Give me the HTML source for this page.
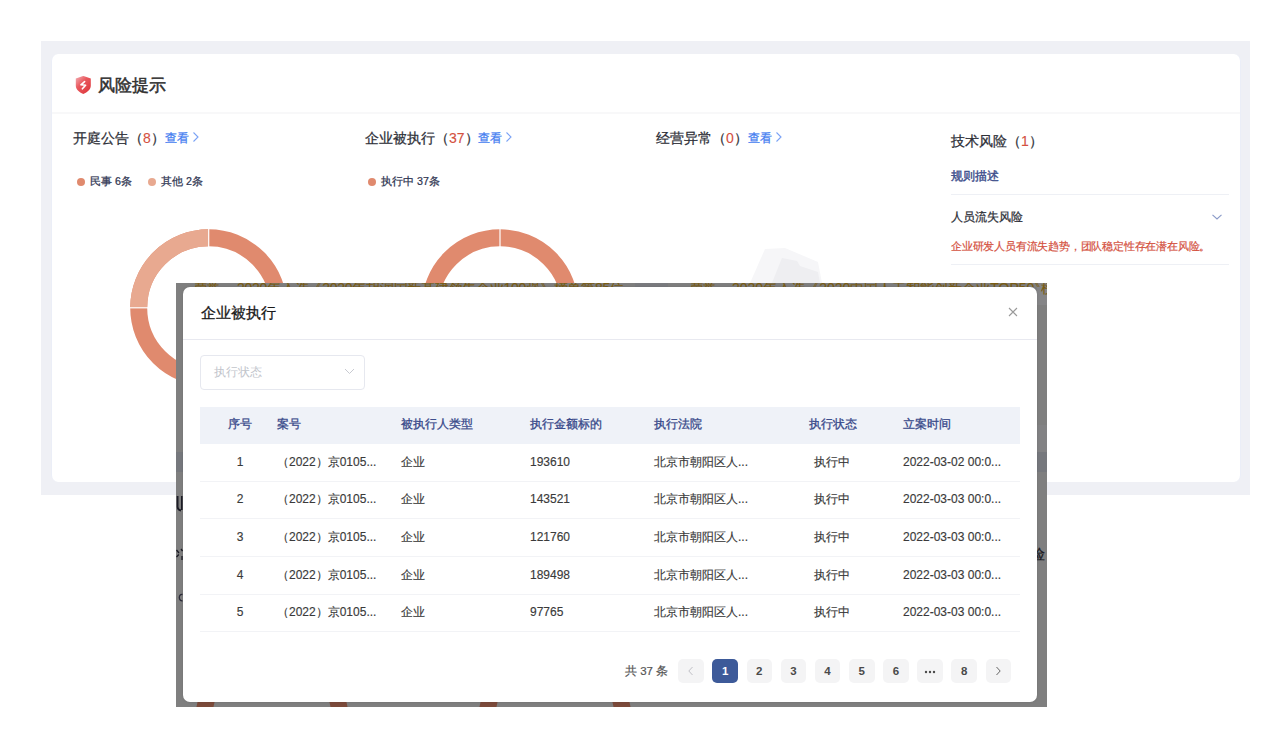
<!DOCTYPE html>
<html><head><meta charset="utf-8">
<style>
*{margin:0;padding:0;box-sizing:border-box}
html,body{width:1267px;height:754px;overflow:hidden;background:#fff;font-family:"Liberation Sans",sans-serif;}
.a{position:absolute;white-space:nowrap}
.panel{left:41px;top:41px;width:1209px;height:454px;background:#eff0f5}
.card{left:51px;top:54px;width:1190px;height:428px;background:#fff;border-radius:7px;border-left:1px solid #ebeef7;border-right:1px solid #ebeef7}
.title{left:98px;top:73px;font-size:17.2px;-webkit-text-stroke:0.5px #303030;color:#303030;line-height:24px}
.hsep{left:52px;top:112px;width:1188px;height:2px;background:#f8f8f9}
.h{font-size:14px;line-height:18px;color:#2e3038;-webkit-text-stroke:0.25px #2e3038}
.h .n{color:#d4503e;-webkit-text-stroke:0.1px #d4503e}
.lk{font-size:12px;line-height:16px;color:#427cf0;-webkit-text-stroke:0.25px #427cf0}
.lg{font-size:10.7px;line-height:14px;color:#2d3350;-webkit-text-stroke:0.22px #2d3350}
.dot{display:inline-block;width:8px;height:8px;border-radius:50%;vertical-align:middle}
.mask{left:176px;top:283px;width:871px;height:424px;background:#7f7f7f;overflow:hidden}
.modal{left:183px;top:287px;width:854px;height:415px;background:#fff;border-radius:7px;box-shadow:0 0 3px rgba(0,0,0,0.12)}
.strip{left:176px;top:283px;width:871px;height:4px;overflow:hidden}
.strip span{position:absolute;top:-4.5px;font-size:14px;line-height:18px;color:#7a5c12;-webkit-text-stroke:0.15px #7a5c12}
.th{font-size:12px;line-height:16px;color:#38498a;-webkit-text-stroke:0.3px #38498a;top:416px}
.td{font-size:12px;line-height:16px;color:#3a3a3a;-webkit-text-stroke:0.15px #3a3a3a}
.rsep{left:200px;width:820px;height:1px;background:#f2f3f6}
.pg{top:659px;width:25.5px;height:23.5px;border-radius:5px;background:#f4f4f5;font-size:11.5px;line-height:25px;text-align:center;color:#4a4a4a;font-weight:bold}
</style></head>
<body>
<div class="a panel"></div>
<div class="a card"></div>
<svg class="a" style="left:72px;top:72px" width="24" height="24" viewBox="0 0 24 24">
  <defs><linearGradient id="sg" x1="0.1" y1="0.1" x2="0.8" y2="0.9"><stop offset="0" stop-color="#f09aa0"/><stop offset="0.4" stop-color="#e9595e"/><stop offset="1" stop-color="#df3b40"/></linearGradient></defs>
  <path d="M11.3 4 C12 4 12.5 4.3 13 4.6 L18.8 6.4 V13.5 C18.8 17.5 15.5 20.3 11.3 22 C7.1 20.3 3.8 17.5 3.8 13.5 V6.4 L9.6 4.6 C10.1 4.3 10.6 4 11.3 4 Z" fill="url(#sg)"/>
  <path d="M12.6 9.6 L8.9 12.8 L13.6 13.3 L10.4 16.8" fill="none" stroke="#fff" stroke-width="1.6" stroke-linecap="round" stroke-linejoin="round"/>
</svg>
<div class="a title">风险提示</div>
<div class="a hsep"></div>

<div class="a h" style="left:73px;top:129px">开庭公告（<span class="n">8</span>）</div>
<div class="a lk" style="left:165px;top:130px">查看</div>
<svg class="a" style="left:192px;top:131px" width="8" height="12"><path d="M1.5 1.5 L6 6 L1.5 10.5" fill="none" stroke="#7aa2f5" stroke-width="1.1"/></svg>
<div class="a h" style="left:365px;top:129px">企业被执行（<span class="n">37</span>）</div>
<div class="a lk" style="left:478px;top:130px">查看</div>
<svg class="a" style="left:505px;top:131px" width="8" height="12"><path d="M1.5 1.5 L6 6 L1.5 10.5" fill="none" stroke="#7aa2f5" stroke-width="1.1"/></svg>
<div class="a h" style="left:656px;top:129px">经营异常（<span class="n">0</span>）</div>
<div class="a lk" style="left:748px;top:130px">查看</div>
<svg class="a" style="left:775px;top:131px" width="8" height="12"><path d="M1.5 1.5 L6 6 L1.5 10.5" fill="none" stroke="#7aa2f5" stroke-width="1.1"/></svg>
<div class="a h" style="left:951px;top:132px">技术风险（<span class="n">1</span>）</div>

<div class="a lg" style="left:77px;top:174px"><span class="dot" style="background:#e08a6e;margin-right:5px"></span>民事 6条</div>
<div class="a lg" style="left:148px;top:174px"><span class="dot" style="background:#e8a990;margin-right:5px"></span>其他 2条</div>
<div class="a lg" style="left:368px;top:174px"><span class="dot" style="background:#e08a6e;margin-right:5px"></span>执行中 37条</div>

<!-- donuts -->
<svg class="a" style="left:0;top:0" width="1267" height="754">
  <circle cx="208.7" cy="307.8" r="70" fill="none" stroke="#e08a6e" stroke-width="17"/>
  <path d="M138.7 307.8 A70 70 0 0 1 208.7 237.8" fill="none" stroke="#e8a990" stroke-width="17"/>
  <line x1="208.7" y1="228" x2="208.7" y2="247" stroke="#fff" stroke-width="1.2"/>
  <line x1="129" y1="307.8" x2="148" y2="307.8" stroke="#fff" stroke-width="1.2"/>
  <circle cx="500" cy="307.8" r="70" fill="none" stroke="#e08a6e" stroke-width="17"/>
  <line x1="500" y1="228" x2="500" y2="247" stroke="#fff" stroke-width="1.2"/>
  <!-- empty illustration -->
  <path d="M765 249 L785 248 L818 262 L822 283 L750 283 Z" fill="#f6f6f8"/>
  <path d="M782 258 L797 261 L800 266 L818 272 L820 283 L772 283 Z" fill="#eeeef1"/>
</svg>

<!-- tech risk -->
<div class="a" style="left:951px;top:168px;font-size:12px;line-height:16px;color:#3e4f8c;-webkit-text-stroke:0.4px #3e4f8c">规则描述</div>
<div class="a" style="left:951px;top:194px;width:278px;height:1px;background:#eef0f5"></div>
<div class="a" style="left:951px;top:209px;font-size:11.55px;line-height:16px;color:#2e3038;-webkit-text-stroke:0.25px #2e3038">人员流失风险</div>
<svg class="a" style="left:1211px;top:213px" width="12" height="8"><path d="M1.5 1.8 L6 6 L10.5 1.8" fill="none" stroke="#8a9ac8" stroke-width="1.1"/></svg>
<div class="a" style="left:951px;top:239px;font-size:10.5px;letter-spacing:-0.2px;line-height:15px;color:#d4503e;-webkit-text-stroke:0.2px #d4503e">企业研发人员有流失趋势，团队稳定性存在潜在风险。</div>
<div class="a" style="left:951px;top:264px;width:278px;height:1px;background:#eef0f5"></div>

<!-- mask -->
<div class="mask a">
  <div class="a" style="left:861px;top:0;width:10px;height:22px;background:#858587"></div>
  <div class="a" style="left:861px;top:142px;width:10px;height:27px;background:#828284"></div>
  <div class="a" style="left:459px;top:0;width:33px;height:4px;background:#7a7b7f"></div>
  <div class="a" style="left:0;top:169px;width:7px;height:20px;background:#76787d"></div>
  <div class="a" style="left:861px;top:169px;width:10px;height:20px;background:#76787d"></div>
  <div class="a" style="left:21px;top:419px;width:17px;height:5px;background:#7b4a3a;transform:skewX(-12deg)"></div>
  <div class="a" style="left:154px;top:419px;width:17px;height:5px;background:#7b4a3a;transform:skewX(12deg)"></div>
  <div class="a" style="left:304px;top:419px;width:17px;height:5px;background:#7b4a3a;transform:skewX(-12deg)"></div>
  <div class="a" style="left:437px;top:419px;width:17px;height:5px;background:#7b4a3a;transform:skewX(12deg)"></div>
</div>
<div class="a strip">
  <span style="left:19px;font-size:12px">荣誉</span>
  <span style="left:61px;letter-spacing:-0.25px">2020年入选《2020年胡润国新基建领先企业100强》榜单第85位</span>
  <span style="left:515px;font-size:12px">荣誉</span>
  <span style="left:556px">2020年入选《2020中国人工智能创新企业TOP50》榜单</span>
</div>
<div class="a strip" style="left:1037px;width:10px;height:12px"><span style="left:3.5px">榜</span></div>
<div class="a" style="left:1037px;top:545px;width:9px;height:18px;overflow:hidden"><span style="position:absolute;left:-6px;top:0;font-size:14px;line-height:18px;color:#1a1a22;-webkit-text-stroke:0.3px #1a1a22">险</span></div>
<svg class="a" style="left:176px;top:490px" width="7" height="120">
  <path d="M1.6 6 V17 Q1.8 20 5 20.5" fill="none" stroke="#1c1c26" stroke-width="1.8"/>
  <path d="M5.8 6 V20" fill="none" stroke="#1c1c26" stroke-width="1.6"/>
  <path d="M0.5 60 L3 63 M0.5 67 L2.8 64.5 M5 59 L6.5 61 M6 66 V70" fill="none" stroke="#1c1c26" stroke-width="1.3"/>
  <path d="M6.5 104.5 Q3.5 104 3.3 107.5 Q3.5 111 6.5 110.8" fill="none" stroke="#2a2a38" stroke-width="1.3"/>
</svg>

<div class="modal a">
  <div class="a" style="left:17.5px;top:14.8px;font-size:15.2px;line-height:22px;color:#1a1a1a;-webkit-text-stroke:0.3px #1a1a1a">企业被执行</div>
  <svg class="a" style="left:825px;top:20px" width="10" height="10"><path d="M1 1 L9 9 M9 1 L1 9" stroke="#9a9a9a" stroke-width="1.1"/></svg>
  <div class="a" style="left:0;top:52px;width:854px;height:1px;background:#e8e9f0"></div>
  <div class="a" style="left:17px;top:68px;width:164.5px;height:34.5px;border:1px solid #e6e8ef;border-radius:4px"></div>
  <div class="a" style="left:31px;top:77px;font-size:12px;line-height:16px;color:#c2c5cc">执行状态</div>
  <svg class="a" style="left:161px;top:81px" width="11" height="7"><path d="M1 1 L5.5 5.5 L10 1" fill="none" stroke="#c8cad1" stroke-width="1"/></svg>
</div>

<!-- table -->
<div class="a" style="left:200px;top:407px;width:820px;height:37px;background:#eff2f8"></div>
<div class="a th" style="left:228px">序号</div>
<div class="a th" style="left:277px">案号</div>
<div class="a th" style="left:401px">被执行人类型</div>
<div class="a th" style="left:530px">执行金额标的</div>
<div class="a th" style="left:654px">执行法院</div>
<div class="a th" style="left:809px">执行状态</div>
<div class="a th" style="left:903px">立案时间</div>
<div class="a td" style="left:220px;top:453.8px;width:40px;text-align:center">1</div>
<div class="a td" style="left:277px;top:453.8px">（2022）京0105...</div>
<div class="a td" style="left:401px;top:453.8px">企业</div>
<div class="a td" style="left:530px;top:453.8px">193610</div>
<div class="a td" style="left:654px;top:453.8px">北京市朝阳区人...</div>
<div class="a td" style="left:814px;top:453.8px">执行中</div>
<div class="a td" style="left:903px;top:453.8px">2022-03-02 00:0...</div>
<div class="a rsep" style="top:481px"></div>
<div class="a td" style="left:220px;top:491.4px;width:40px;text-align:center">2</div>
<div class="a td" style="left:277px;top:491.4px">（2022）京0105...</div>
<div class="a td" style="left:401px;top:491.4px">企业</div>
<div class="a td" style="left:530px;top:491.4px">143521</div>
<div class="a td" style="left:654px;top:491.4px">北京市朝阳区人...</div>
<div class="a td" style="left:814px;top:491.4px">执行中</div>
<div class="a td" style="left:903px;top:491.4px">2022-03-03 00:0...</div>
<div class="a rsep" style="top:518px"></div>
<div class="a td" style="left:220px;top:529.0px;width:40px;text-align:center">3</div>
<div class="a td" style="left:277px;top:529.0px">（2022）京0105...</div>
<div class="a td" style="left:401px;top:529.0px">企业</div>
<div class="a td" style="left:530px;top:529.0px">121760</div>
<div class="a td" style="left:654px;top:529.0px">北京市朝阳区人...</div>
<div class="a td" style="left:814px;top:529.0px">执行中</div>
<div class="a td" style="left:903px;top:529.0px">2022-03-03 00:0...</div>
<div class="a rsep" style="top:556px"></div>
<div class="a td" style="left:220px;top:566.6px;width:40px;text-align:center">4</div>
<div class="a td" style="left:277px;top:566.6px">（2022）京0105...</div>
<div class="a td" style="left:401px;top:566.6px">企业</div>
<div class="a td" style="left:530px;top:566.6px">189498</div>
<div class="a td" style="left:654px;top:566.6px">北京市朝阳区人...</div>
<div class="a td" style="left:814px;top:566.6px">执行中</div>
<div class="a td" style="left:903px;top:566.6px">2022-03-03 00:0...</div>
<div class="a rsep" style="top:594px"></div>
<div class="a td" style="left:220px;top:604.2px;width:40px;text-align:center">5</div>
<div class="a td" style="left:277px;top:604.2px">（2022）京0105...</div>
<div class="a td" style="left:401px;top:604.2px">企业</div>
<div class="a td" style="left:530px;top:604.2px">97765</div>
<div class="a td" style="left:654px;top:604.2px">北京市朝阳区人...</div>
<div class="a td" style="left:814px;top:604.2px">执行中</div>
<div class="a td" style="left:903px;top:604.2px">2022-03-03 00:0...</div>
<div class="a rsep" style="top:631px"></div>
<div class="a" style="left:625px;top:663px;font-size:11.5px;line-height:16px;color:#555;-webkit-text-stroke:0.2px #555">共 37 条</div>
<div class="a pg" style="left:678.2px;line-height:0;"><svg width="8" height="10" style="margin-top:7px"><path d="M5.5 1 L1.8 5 L5.5 9" fill="none" stroke="#c0c0c6" stroke-width="1"/></svg></div>
<div class="a pg" style="left:712.4px;background:#3d5a99;color:#fff;">1</div>
<div class="a pg" style="left:746.5px;">2</div>
<div class="a pg" style="left:780.7px;">3</div>
<div class="a pg" style="left:814.8px;">4</div>
<div class="a pg" style="left:849.0px;">5</div>
<div class="a pg" style="left:883.1px;">6</div>
<div class="a pg" style="left:917.2px;"><svg width="12" height="4" style="margin-top:10.5px;display:block;margin-left:auto;margin-right:auto"><circle cx="2" cy="2" r="1.2" fill="#4a4a4a"/><circle cx="6" cy="2" r="1.2" fill="#4a4a4a"/><circle cx="10" cy="2" r="1.2" fill="#4a4a4a"/></svg></div>
<div class="a pg" style="left:951.4px;">8</div>
<div class="a pg" style="left:985.5px;line-height:0;"><svg width="8" height="10" style="margin-top:7px"><path d="M2.5 1 L6.2 5 L2.5 9" fill="none" stroke="#666" stroke-width="1"/></svg></div>
</body></html>
